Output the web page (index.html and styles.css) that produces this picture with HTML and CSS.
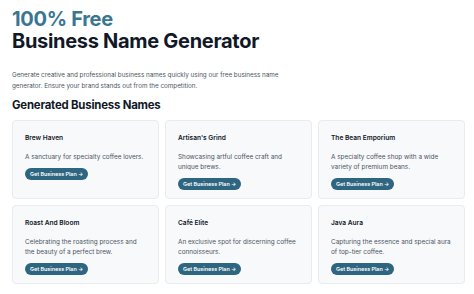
FILE: index.html
```html
<!DOCTYPE html>
<html lang="en">
<head>
    <meta charset="UTF-8">
    <meta name="viewport" content="width=device-width, initial-scale=1.0">
    <title>Business Name Generator</title>
    <link rel="stylesheet" href="styles.css">
</head>
<body>

    <div class="container">
        <h1><span class="accent">100% Free</span><br>Business Name Generator</h1>
        <p class="intro">Generate creative and professional business names quickly using our free business name generator. Ensure your brand stands out from the competition.</p>

        <h2>Generated Business Names</h2>
        <div class="grid">
            <div class="card">
                <h3>Brew Haven</h3>
                <p>A sanctuary for specialty coffee lovers.</p>
                <a class="btn" href="#">Get Business Plan &rarr;</a>
            </div>
            <div class="card">
                <h3>Artisan's Grind</h3>
                <p>Showcasing artful coffee craft and unique brews.</p>
                <a class="btn" href="#">Get Business Plan &rarr;</a>
            </div>
            <div class="card">
                <h3>The Bean Emporium</h3>
                <p>A specialty coffee shop with a wide variety of premium beans.</p>
                <a class="btn" href="#">Get Business Plan &rarr;</a>
            </div>
            <div class="card">
                <h3>Roast And Bloom</h3>
                <p>Celebrating the roasting process and the beauty of a perfect brew.</p>
                <a class="btn" href="#">Get Business Plan &rarr;</a>
            </div>
            <div class="card">
                <h3>Café Elite</h3>
                <p>An exclusive spot for discerning coffee connoisseurs.</p>
                <a class="btn" href="#">Get Business Plan &rarr;</a>
            </div>
            <div class="card">
                <h3>Java Aura</h3>
                <p>Capturing the essence and special aura of top-tier coffee.</p>
                <a class="btn" href="#">Get Business Plan &rarr;</a>
            </div>
        </div>
    </div>

</body>
</html>
```

FILE: styles.css
```css
body {
    font-family: Inter, "Noto Sans", sans-serif;
    background-color: #ffffff;
    margin: 0;
    color: #111827;
}
.container {
    padding: 8px 9px 0 12px;
}
h1 {
    font-size: 20px;
    line-height: 22px;
    font-weight: 700;
    letter-spacing: -0.3px;
    margin: 0;
    color: #111827;
}
.accent {
    color: #3a7591;
}
.intro {
    font-size: 6.3px;
    line-height: 11px;
    color: #4b5563;
    margin: 18px 0 0;
    max-width: 290px;
}
h2 {
    font-size: 11.4px;
    line-height: 16px;
    font-weight: 700;
    letter-spacing: -0.2px;
    margin: 5px 0 0;
}
.grid {
    display: grid;
    grid-template-columns: repeat(3, 1fr);
    gap: 6px;
    margin-top: 7px;
    width: 453px;
}
.card {
    display: flex;
    flex-direction: column;
    align-items: flex-start;
    background: #f8f9fb;
    border: 1px solid #e8ebef;
    border-radius: 4px;
    padding: 12px 12px 0;
    height: 79px;
    box-sizing: border-box;
}
.card h3 {
    font-size: 6.6px;
    line-height: 10px;
    font-weight: 600;
    margin: 0;
}
.card p {
    font-size: 6.4px;
    line-height: 10px;
    color: #4b5563;
    margin: 9px 0 6px;
}
.btn {
    display: block;
    background-color: #2e6580;
    color: white;
    text-decoration: none;
    font-size: 5.4px;
    font-weight: 600;
    line-height: 12px;
    padding: 0 5px;
    border-radius: 6px;
}
```
